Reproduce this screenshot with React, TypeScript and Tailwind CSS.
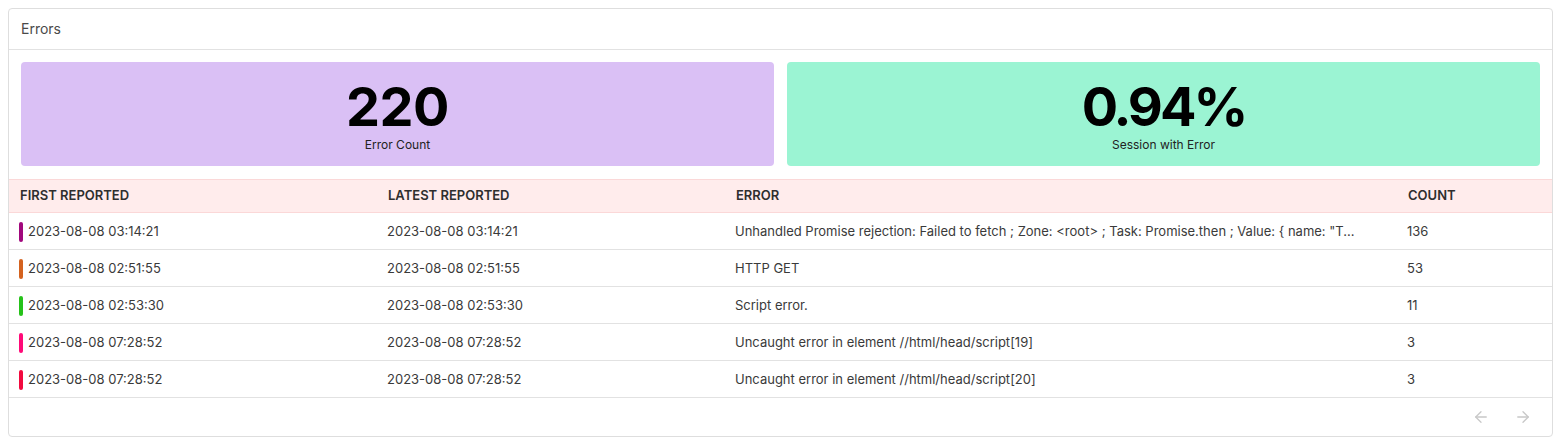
import React from "react";

const rows = [
  { color: "bg-[#a1087c]", first: "2023-08-08 03:14:21", latest: "2023-08-08 03:14:21", error: 'Unhandled Promise rejection: Failed to fetch ; Zone: <root> ; Task: Promise.then ; Value: { name: "T...', count: "136" },
  { color: "bg-[#d4621f]", first: "2023-08-08 02:51:55", latest: "2023-08-08 02:51:55", error: "HTTP GET", count: "53" },
  { color: "bg-[#26c21a]", first: "2023-08-08 02:53:30", latest: "2023-08-08 02:53:30", error: "Script error.", count: "11" },
  { color: "bg-[#ff0a78]", first: "2023-08-08 07:28:52", latest: "2023-08-08 07:28:52", error: "Uncaught error in element //html/head/script[19]", count: "3" },
  { color: "bg-[#f20a3e]", first: "2023-08-08 07:28:52", latest: "2023-08-08 07:28:52", error: "Uncaught error in element //html/head/script[20]", count: "3" },
];

const cols = "grid grid-cols-[368px_348px_672px_1fr]";

export default function App() {
  return (
    <div className="p-2 bg-white" style={{ fontFamily: "Inter, 'Noto Sans', sans-serif" }}>
      <div className="w-[1545px] border border-[#dedede] rounded-[4px] bg-white h-[429px] flex flex-col">
        <div className="h-[41px] border-b border-[#e2e2e2] flex items-center px-3 pb-[2px] text-[14px] text-[#4a4a4a]">
          Errors
        </div>
        <div className="grid grid-cols-2 gap-[13px] px-3 pt-3 pb-[13px]">
          <div className="h-[104px] rounded-[4px] bg-[#dac0f5] flex flex-col items-center pt-[18px]">
            <div className="text-[54px] leading-[54px] font-bold text-black tracking-[-0.5px]">220</div>
            <div className="text-[12px] leading-[16px] mt-[3px] text-[#222]">Error Count</div>
          </div>
          <div className="h-[104px] rounded-[4px] bg-[#9bf4d3] flex flex-col items-center pt-[18px]">
            <div className="text-[54px] leading-[54px] font-bold text-black tracking-[-3px]">0.94%</div>
            <div className="text-[12px] leading-[16px] mt-[3px] text-[#222]">Session with Error</div>
          </div>
        </div>
        <div className={`${cols} h-[34px] items-center bg-[#ffecec] border-y border-[#fbd8d8] text-[13px] font-semibold text-[#2e2e2e] uppercase`}>
          <div className="px-[11px]">First Reported</div>
          <div className="px-[11px]">Latest Reported</div>
          <div className="px-[11px]">Error</div>
          <div className="px-[11px]">Count</div>
        </div>
        {rows.map((r, i) => (
          <div key={i} className={`${cols} h-[37px] items-center pt-[1px] border-b border-[#e2e2e2] text-[13px] text-[#3a3a3a]`}>
            <div className="pl-[10px] pr-[11px] flex items-center gap-[5px]">
              <span className={`w-[4px] h-[20px] rounded-[2px] ${r.color}`} />
              <span>{r.first}</span>
            </div>
            <div className="px-[10px]">{r.latest}</div>
            <div className="px-[10px] whitespace-nowrap overflow-hidden">{r.error}</div>
            <div className="px-[10px]">{r.count}</div>
          </div>
        ))}
        <div className="flex-1 flex items-center justify-end gap-[24px] pr-[20px] text-[#c8c8c8]">
          <svg width="18" height="18" viewBox="0 0 24 24" fill="none" stroke="currentColor" strokeWidth="1.75" strokeLinecap="round" strokeLinejoin="round">
            <path d="M19 12H5" />
            <path d="M12 19l-7-7 7-7" />
          </svg>
          <svg width="18" height="18" viewBox="0 0 24 24" fill="none" stroke="currentColor" strokeWidth="1.75" strokeLinecap="round" strokeLinejoin="round">
            <path d="M5 12h14" />
            <path d="M12 5l7 7-7 7" />
          </svg>
        </div>
      </div>
    </div>
  );
}
